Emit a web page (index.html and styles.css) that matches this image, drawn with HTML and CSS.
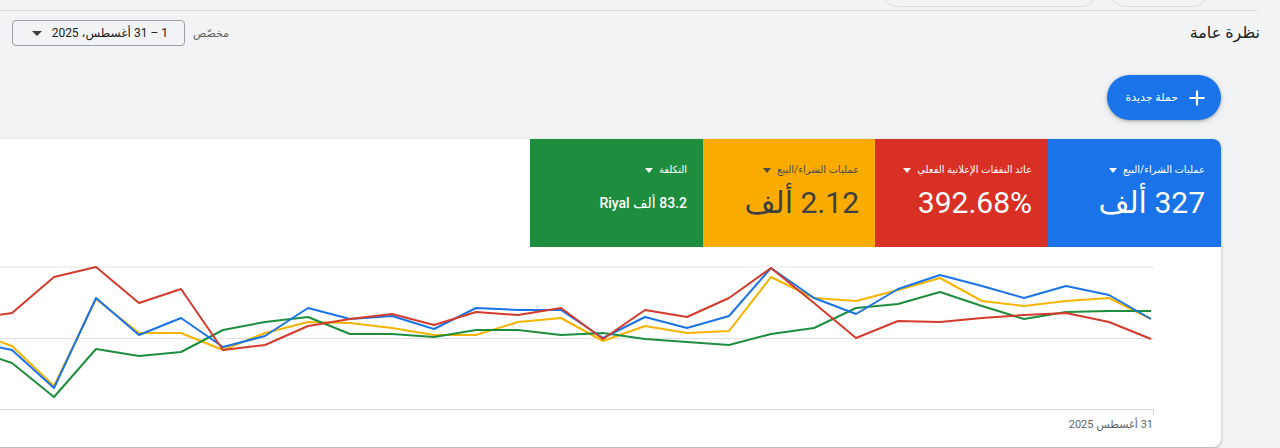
FILE: index.html
```html
<!DOCTYPE html>
<html lang="ar" dir="rtl">
<head>
<meta charset="utf-8">
<title>نظرة عامة</title>
<link rel="stylesheet" href="styles.css">
</head>
<body>
<div class="page">
<div class="topbar">
  <div class="chips">
    <span class="chip chip-b"></span>
    <span class="chip chip-a"></span>
  </div>
</div>

<div class="title-row">
  <h1 class="title">نظرة عامة</h1>
  <div class="date-ctrl">
    <span class="date-label">مخصّص</span>
    <div class="date-box">
      <span class="date-text">1 – 31 أغسطس، 2025</span>
      <span class="caret"></span>
    </div>
  </div>
</div>

<div class="fab-row">
  <div class="fab">
    <svg class="fab-icon" width="20" height="20" viewBox="0 0 24 24"><path d="M12 3v18M3 12h18" stroke="#fff" stroke-width="2.6" fill="none"/></svg>
    <span class="fab-text">حملة جديدة</span>
  </div>
</div>

<div class="card">
  <div class="tiles">
    <div class="tile tile-blue">
      <div class="tile-label"><span>عمليات الشراء/البيع</span><span class="tcaret"></span></div>
      <div class="tile-value">327 ألف</div>
    </div>
    <div class="tile tile-red">
      <div class="tile-label"><span>عائد النفقات الإعلانية الفعلي</span><span class="tcaret"></span></div>
      <div class="tile-value" dir="ltr">392.68%</div>
    </div>
    <div class="tile tile-yellow">
      <div class="tile-label"><span>عمليات الشراء/البيع</span><span class="tcaret"></span></div>
      <div class="tile-value">2.12 ألف</div>
    </div>
    <div class="tile tile-green">
      <div class="tile-label"><span>التكلفة</span><span class="tcaret"></span></div>
      <div class="tile-value small">83.2 ألف Riyal</div>
    </div>
  </div>
  <svg class="chart" width="1350" height="170" viewBox="-129 246 1350 170">
    <g stroke-width="1" fill="none">
      <line x1="-129" y1="266" x2="1154" y2="266" stroke="#e6e6e6"/>
      <line x1="-129" y1="337.5" x2="1154" y2="337.5" stroke="#e0e0e0"/>
      <line x1="-129" y1="408.5" x2="1154" y2="408.5" stroke="#d6d6d6"/>
      <line x1="1153.5" y1="408" x2="1153.5" y2="414" stroke="#d6d6d6"/>
    </g>
    <g fill="none" stroke-width="2" stroke-linejoin="round">
      <polyline stroke="#f4b400" points="-30,330 12,345 54,385 96,298 139,332 181,332 223,349 265,332 308,321 350,322 392,327 434,334 476,334 518,321 561,317 603,340 645,325 687,332 729,330 771,276 814,297 856,300 898,289 940,277 982,300 1024,305 1066,300 1109,297 1151,318"/>
      <polyline stroke="#1e8e3e" points="-30,348 12,362 54,396 96,348 139,355 181,351 223,329 265,321 308,316 350,333 392,333 434,336 476,329 518,329 561,334 603,332 645,338 687,341 729,344 771,333 814,327 856,307 898,303 940,291 982,305 1024,318 1066,311 1109,310 1151,310"/>
      <polyline stroke="#1a73e8" points="-30,340 12,349 54,387 96,297 139,334 181,317 223,346 265,335 308,307 350,318 392,315 434,328 476,307 518,309 561,309 603,337 645,316 687,327 729,315 771,267 814,297 856,313 898,288 940,274 982,285 1024,297 1066,285 1109,294 1151,318"/>
      <polyline stroke="#d33b2c" points="-30,318 12,312 54,276 96,266 139,302 181,288 223,349 265,344 308,325 350,318 392,313 434,324 476,311 518,314 561,307 603,338 645,309 687,316 729,297 771,267 814,302 856,337 898,320 940,321 982,317 1024,314 1066,312 1109,321 1151,338"/>
    </g>
  </svg>
  <div class="axis"><span class="axis-label">31 أغسطس 2025</span></div>
</div>
</div>
</body>
</html>
```

FILE: styles.css
```css
html, body {
  margin: 0;
  padding: 0;
}
body {
  background: #f1f3f4;
  font-family: Roboto, "DejaVu Sans", "Noto Sans", sans-serif;
  color: #202124;
}
.page {
  width: 1280px;
  height: 448px;
  overflow: hidden;
}

.topbar {
  height: 10px;
  margin-right: 22px;
  border-bottom: 1px solid #dadce0;
  overflow: hidden;
  display: flex;
  align-items: flex-end;
}
.chips {
  display: flex;
  gap: 13px;
  margin-right: 50px;
  margin-bottom: 3px;
}
.chip {
  display: block;
  height: 30px;
  border: 1px solid #dadce0;
  border-radius: 16px;
  box-sizing: border-box;
}
.chip-b { width: 98px; }
.chip-a { width: 215px; }

.title-row {
  display: flex;
  justify-content: space-between;
  align-items: center;
  padding: 9px 20px 0 12px;
  height: 26px;
}
.title {
  margin: 0;
  font-size: 16px;
  font-weight: 400;
  color: #202124;
  line-height: 26px;
}
.date-ctrl {
  display: flex;
  align-items: center;
  gap: 8px;
}
.date-label {
  font-size: 11px;
  color: #5f6368;
}
.date-box {
  width: 173px;
  height: 26px;
  box-sizing: border-box;
  border: 1px solid #9aa0a6;
  border-radius: 4px;
  display: flex;
  align-items: center;
  justify-content: space-between;
  padding: 0 16px 0 19px;
  font-size: 12px;
  color: #202124;
  white-space: nowrap;
}
.caret {
  width: 0;
  height: 0;
  border-left: 5px solid transparent;
  border-right: 5px solid transparent;
  border-top: 5px solid #3c4043;
}

.fab-row {
  display: flex;
  margin-top: 29px;
  margin-right: 59px;
}
.fab {
  width: 114px;
  height: 45px;
  box-sizing: border-box;
  background: #1a73e8;
  border-radius: 23px;
  box-shadow: 0 1px 3px rgba(60, 64, 67, 0.35), 0 2px 6px rgba(60, 64, 67, 0.15);
  display: flex;
  align-items: center;
  padding-right: 14px;
  gap: 9px;
  color: #fff;
}
.fab-text {
  font-size: 11px;
  color: #fff;
}

.card {
  width: 1350px;
  height: 308px;
  margin-top: 19px;
  margin-right: 59px;
  background: #fff;
  border-radius: 8px;
  box-shadow: 0 1px 2px rgba(60, 64, 67, 0.3), 0 1px 3px 1px rgba(60, 64, 67, 0.1);
  overflow: hidden;
}
.tiles {
  display: flex;
  height: 108px;
}
.tile {
  width: 173px;
  height: 108px;
  box-sizing: border-box;
  padding: 23px 16px 0 12px;
  color: #fff;
}
.tile-blue { background: #1a73e8; border-top-right-radius: 8px; }
.tile-red { background: #d93025; }
.tile-yellow { background: #f9ab00; color: #3c4043; width: 172px; }
.tile-green { background: #1e8e3e; }

.tile-label {
  display: flex;
  align-items: center;
  gap: 6px;
  font-size: 10px;
  line-height: 16px;
  height: 16px;
}
.tcaret {
  width: 0;
  height: 0;
  border-left: 4.5px solid transparent;
  border-right: 4.5px solid transparent;
  border-top: 5px solid currentColor;
}
.tile-yellow .tile-label { color: #4a4a4a; }
.tile-value {
  margin-top: 7px;
  font-size: 30px;
  line-height: 36px;
  font-weight: 400;
  text-align: right;
}
.tile-value.small {
  font-size: 14px;
  font-weight: 500;
  line-height: 36px;
}

.chart {
  display: block;
}
.axis {
  height: 16px;
  padding-right: 68px;
  font-size: 11px;
  line-height: 16px;
  color: #5f6368;
}
```
